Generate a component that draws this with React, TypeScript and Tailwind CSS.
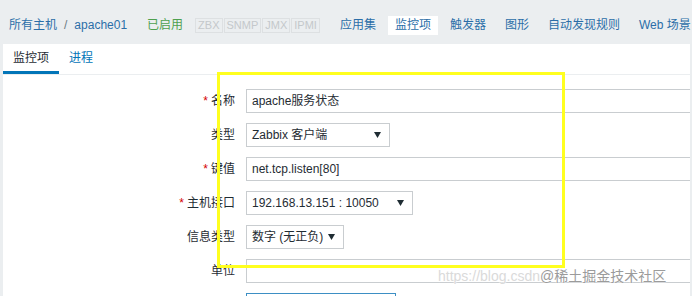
import React from 'react';

const font = { fontFamily: '"Liberation Sans", Arial, "Noto Sans CJK SC", sans-serif' };

function Arrow() {
  return (
    <svg width="7" height="6" viewBox="0 0 7 6" className="shrink-0">
      <polygon points="0,0 7,0 3.5,6" fill="#1f2c33" />
    </svg>
  );
}

function Label({ text, required }: { text: string; required?: boolean }) {
  return (
    <div className="w-[232px] shrink-0 text-right text-[12px] text-[#1f2c33] leading-none">
      {required && <span className="text-[#d40000] mr-[3px]">*</span>}
      {text}
    </div>
  );
}

function TextInput({ value }: { value?: string }) {
  return (
    <div className="ml-[11px] w-[460px] h-[24px] shrink-0 border border-[#c9cdd0] bg-white flex items-center pl-[5px] text-[12px] text-[#1f2c33]">
      {value}
    </div>
  );
}

function Select({ value, width }: { value: string; width: string }) {
  return (
    <div className={`ml-[11px] ${width} h-[24px] shrink-0 border border-[#c9cdd0] bg-white flex items-center justify-between pl-[5px] pr-[8px] text-[12px] text-[#1f2c33]`}>
      <span>{value}</span>
      <Arrow />
    </div>
  );
}

export default function App() {
  const nav = ['应用集', '监控项', '触发器', '图形', '自动发现规则', 'Web 场景'];

  return (
    <div className="w-[692px] h-[296px] overflow-hidden bg-[#ebeef0] relative" style={font}>
      {/* header */}
      <div className="h-[44px] pt-[6px] pl-[9px] flex items-center whitespace-nowrap text-[12px] overflow-hidden">
        <span className="text-[#2b6ea8]">所有主机</span>
        <span className="text-[#6d7b84] mx-[7px]">/</span>
        <span className="text-[#2b6ea8]">apache01</span>
        <span className="text-[#4ea04f] ml-[20px]">已启用</span>
        <div className="ml-[12px] flex gap-[1px] text-[11px] text-[#c4c8cb]">
          {['ZBX', 'SNMP', 'JMX', 'IPMI'].map((b) => (
            <span key={b} className="h-[15px] px-[2px] border border-[#dde0e2] flex items-center leading-none">
              {b}
            </span>
          ))}
        </div>
        <div className="ml-[13px] flex gap-[5px] shrink-0">
          {nav.map((n) => (
            <span
              key={n}
              className={`h-[19px] px-[7px] flex items-center shrink-0 text-[#2b6ea8] ${n === '监控项' ? 'bg-white' : ''}`}
            >
              {n}
            </span>
          ))}
        </div>
      </div>

      {/* content */}
      <div className="ml-[3px] w-[687px] h-[252px] bg-white overflow-hidden">
        <div className="h-[31px] border-b border-[#ebeef0] flex text-[12px]">
          <div className="h-[30px] px-[10px] flex items-center border-b-[3px] border-[#0275b8] text-[#1f2c33]">监控项</div>
          <div className="h-[30px] px-[10px] flex items-center pb-[3px] text-[#0275b8]">进程</div>
        </div>

        <div className="pt-[14px] flex flex-col gap-[10px]">
          <div className="flex items-center">
            <Label text="名称" required />
            <TextInput value="apache服务状态" />
          </div>
          <div className="flex items-center">
            <Label text="类型" />
            <Select value="Zabbix 客户端" width="w-[144px]" />
          </div>
          <div className="flex items-center">
            <Label text="键值" required />
            <TextInput value="net.tcp.listen[80]" />
          </div>
          <div className="flex items-center">
            <Label text="主机接口" required />
            <Select value="192.168.13.151 : 10050" width="w-[167px]" />
          </div>
          <div className="flex items-center">
            <Label text="信息类型" />
            <Select value="数字 (无正负)" width="w-[98px]" />
          </div>
          <div className="flex items-center">
            <Label text="单位" />
            <TextInput />
          </div>
          <div className="flex items-center">
            <Label text="" />
            <div className="ml-[11px] w-[150px] h-[24px] shrink-0 border border-[#3d8fc4] bg-white" />
          </div>
        </div>
      </div>

      {/* yellow annotation */}
      <div className="absolute left-[217px] top-[72px] w-[348px] h-[196px] border-[3px] border-[#ffff1f] pointer-events-none" />

      {/* watermark */}
      <div
        className="absolute left-[438px] top-[268px] text-[14px] leading-[16px] whitespace-nowrap"
        style={{ textShadow: '0 0 2px #fff, 0 0 1px #fff' }}
      >
        <span className="text-[#dadada]">https://blog.csdn</span>
        <span className="text-[#9b9b9b]">@稀土掘金技术社区</span>
      </div>
    </div>
  );
}
